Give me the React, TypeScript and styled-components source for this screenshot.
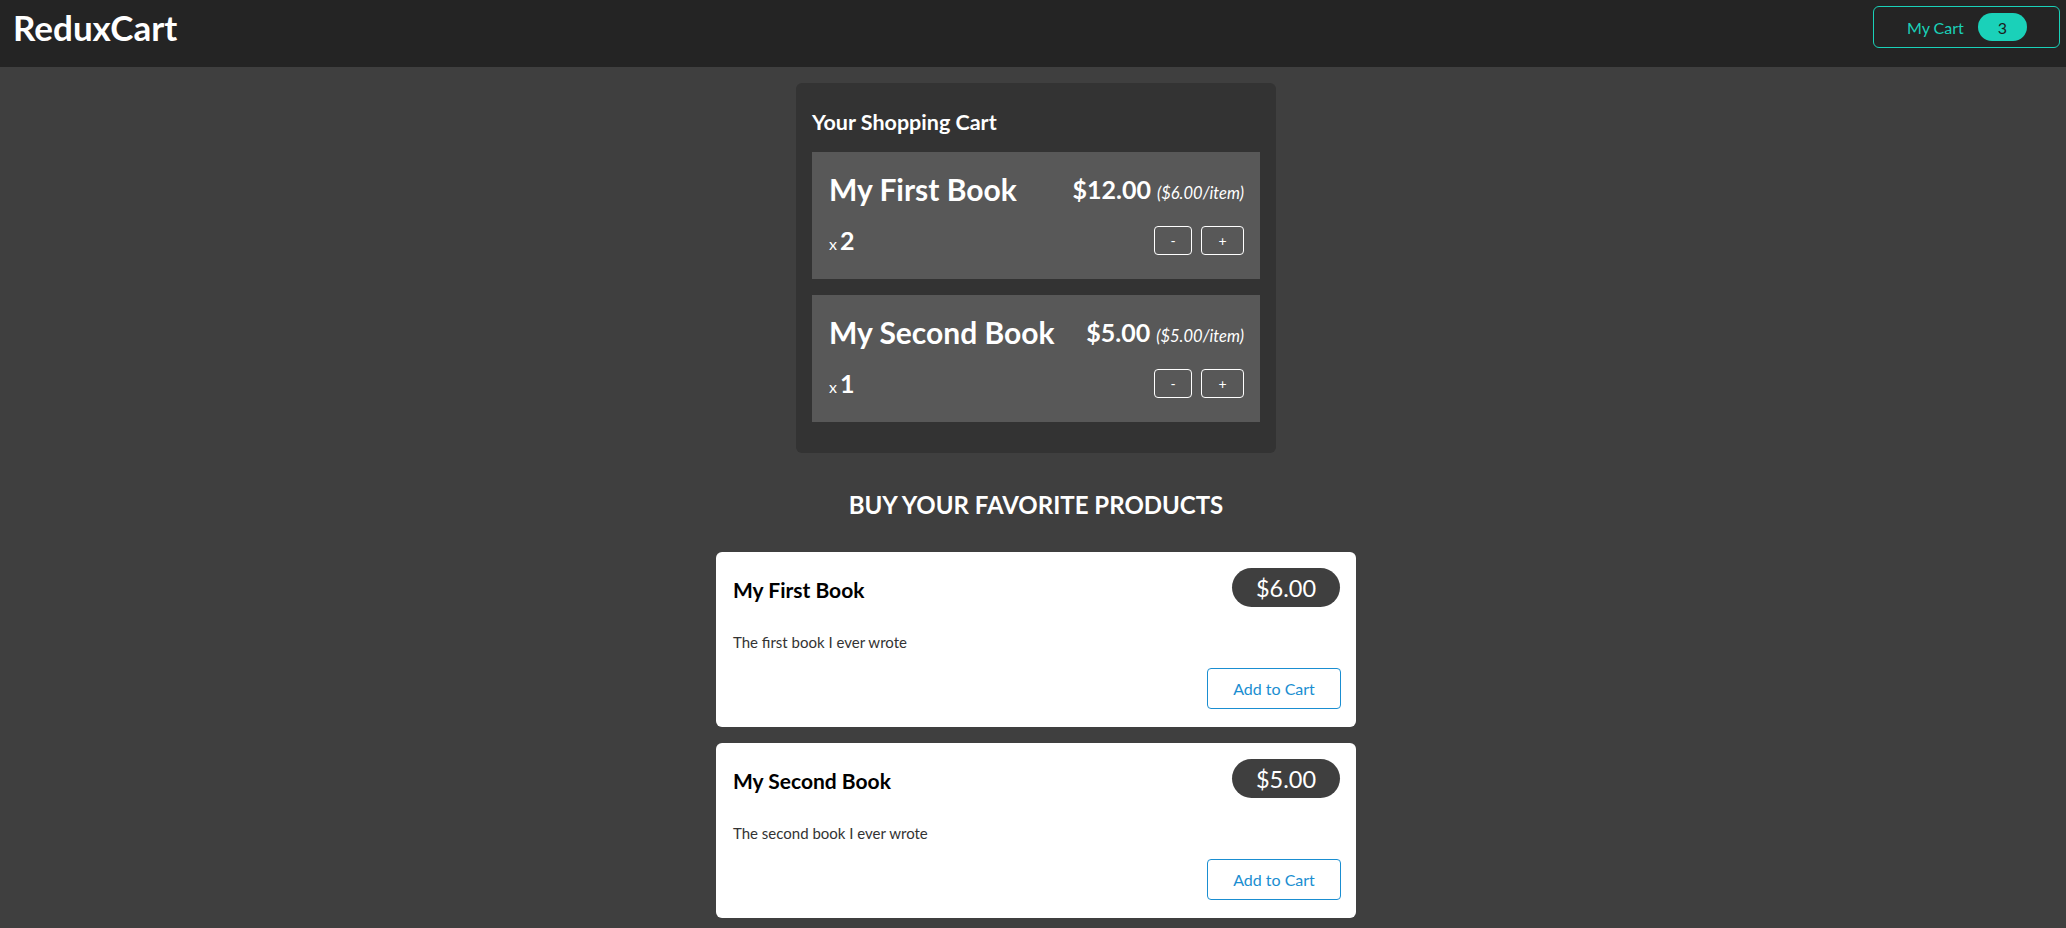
import React from "react";
import styled, { createGlobalStyle } from "styled-components";

const GlobalStyle = createGlobalStyle`
  * { box-sizing: border-box; }
  html, body { margin: 0; padding: 0; }
  body {
    background: #3f3f3f;
    font-family: Lato, "Noto Sans", sans-serif;
  }
`;

interface CartEntry {
  title: string;
  quantity: number;
  price: number;
}

interface Product {
  title: string;
  price: number;
  description: string;
}

const cartItems: CartEntry[] = [
  { title: "My First Book", quantity: 2, price: 6 },
  { title: "My Second Book", quantity: 1, price: 5 }
];

const products: Product[] = [
  { title: "My First Book", price: 6, description: "The first book I ever wrote" },
  { title: "My Second Book", price: 5, description: "The second book I ever wrote" }
];

const money = (val: number) => `$${val.toFixed(2)}`;

const Header = styled.header`
  height: 67px;
  background: #242424;
  display: flex;
  justify-content: space-between;
  align-items: center;
  padding: 0 6px 13px 13px;
`;

const Logo = styled.h1`
  margin: 0;
  color: #fff;
  font-size: 35px;
  font-weight: 700;
  line-height: 1;
`;

const CartButton = styled.button`
  display: flex;
  align-items: center;
  justify-content: space-between;
  width: 187px;
  height: 42px;
  padding: 0 32px 0 33px;
  background: transparent;
  border: 1px solid #1ad1b9;
  border-radius: 6px;
  color: #1ad1b9;
  font-family: inherit;
  font-size: 16px;
`;

const Badge = styled.span`
  width: 49px;
  height: 28px;
  border-radius: 30px;
  background: #1ad1b9;
  color: #1d1d1d;
  display: flex;
  align-items: center;
  justify-content: center;
  font-size: 16px;
`;

const Main = styled.main`
  width: 646px;
  margin: 0 auto;
  padding-left: 6px;
`;

const CartPanel = styled.section`
  width: 480px;
  margin: 16px auto 0;
  background: #333333;
  border-radius: 6px;
  padding: 16px 16px 31px;
  color: #fff;
`;

const CartTitle = styled.h2`
  margin: 10px 0 16px;
  font-size: 21.5px;
  line-height: 27px;
  font-weight: 700;
`;

const List = styled.ul<{ $gap: number }>`
  list-style: none;
  margin: 0;
  padding: 0;
  display: flex;
  flex-direction: column;
  gap: ${p => p.$gap}px;
`;

const CartRow = styled.li`
  background: #585858;
  padding: 17px 16px 22px 17px;
  height: 127px;
`;

const RowHead = styled.div`
  display: flex;
  justify-content: space-between;
  align-items: center;
`;

const ItemName = styled.h3`
  margin: 0;
  font-size: 30px;
  line-height: 40px;
  font-weight: 700;
`;

const Total = styled.div`
  font-size: 25px;
  font-weight: 700;
`;

const Each = styled.span`
  font-size: 16.5px;
  font-weight: 400;
  font-style: italic;
  margin-left: 6px;
`;

const RowFoot = styled.div`
  display: flex;
  justify-content: space-between;
  align-items: center;
  margin-top: 16px;
`;

const Quantity = styled.div`
  font-size: 16px;
  span {
    font-size: 25px;
    font-weight: 700;
    margin-left: 3px;
  }
`;

const Actions = styled.div`
  display: flex;
  gap: 9px;
`;

const StepButton = styled.button<{ $w: number }>`
  width: ${p => p.$w}px;
  height: 29px;
  background: transparent;
  border: 1px solid #fff;
  border-radius: 4px;
  color: #fff;
  font-family: inherit;
  font-size: 14px;
  padding: 0;
`;

const ProductsTitle = styled.h2`
  margin: 38px 0 33px;
  text-align: center;
  text-transform: uppercase;
  color: #fff;
  font-size: 24px;
  line-height: 28px;
  font-weight: 700;
`;

const ProductCard = styled.li`
  background: #fff;
  border-radius: 6px;
  padding: 16px 16px 17px 17px;
  height: 175px;
`;

const ProductName = styled.h3`
  margin: 0;
  padding-top: 3px;
  font-size: 21px;
  font-weight: 700;
  color: #000;
`;

const PriceTag = styled.div`
  height: 39px;
  width: 108px;
  border-radius: 30px;
  background: #3f3f3f;
  color: #fff;
  font-size: 23.5px;
  display: flex;
  align-items: center;
  justify-content: center;
`;

const Description = styled.p`
  margin: 24px 0 0;
  color: #333;
  font-size: 15px;
  line-height: 22px;
`;

const CardFoot = styled.div`
  display: flex;
  justify-content: flex-end;
  margin-top: 15px;
`;

const AddButton = styled.button`
  width: 134px;
  height: 41px;
  background: transparent;
  border: 1px solid #1a8ed1;
  border-radius: 4px;
  color: #1a8ed1;
  font-family: inherit;
  font-size: 16px;
  margin-right: -1px;
`;

export default function App(): React.ReactElement {
  const count = cartItems.reduce((sum, item) => sum + item.quantity, 0);

  return (
    <>
      <GlobalStyle />
      <Header>
        <Logo>ReduxCart</Logo>
        <CartButton>
          My Cart
          <Badge>{count}</Badge>
        </CartButton>
      </Header>
      <Main>
        <CartPanel>
          <CartTitle>Your Shopping Cart</CartTitle>
          <List $gap={16}>
            {cartItems.map(item => (
              <CartRow key={item.title}>
                <RowHead>
                  <ItemName>{item.title}</ItemName>
                  <Total>
                    {money(item.price * item.quantity)}
                    <Each>({money(item.price)}/item)</Each>
                  </Total>
                </RowHead>
                <RowFoot>
                  <Quantity>
                    x<span>{item.quantity}</span>
                  </Quantity>
                  <Actions>
                    <StepButton $w={38}>-</StepButton>
                    <StepButton $w={43}>+</StepButton>
                  </Actions>
                </RowFoot>
              </CartRow>
            ))}
          </List>
        </CartPanel>
        <ProductsTitle>Buy your favorite products</ProductsTitle>
        <List $gap={16}>
          {products.map(p => (
            <ProductCard key={p.title}>
              <RowHead>
                <ProductName>{p.title}</ProductName>
                <PriceTag>{money(p.price)}</PriceTag>
              </RowHead>
              <Description>{p.description}</Description>
              <CardFoot>
                <AddButton>Add to Cart</AddButton>
              </CardFoot>
            </ProductCard>
          ))}
        </List>
      </Main>
    </>
  );
}
